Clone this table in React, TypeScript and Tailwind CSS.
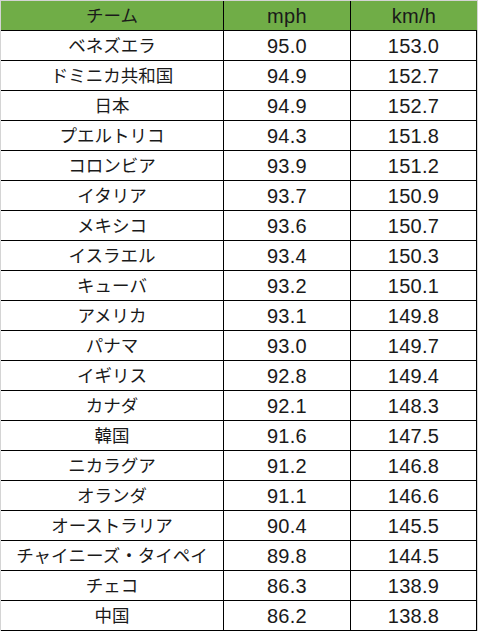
const rows: [string, string, string][] = [
  ["ベネズエラ", "95.0", "153.0"],
  ["ドミニカ共和国", "94.9", "152.7"],
  ["日本", "94.9", "152.7"],
  ["プエルトリコ", "94.3", "151.8"],
  ["コロンビア", "93.9", "151.2"],
  ["イタリア", "93.7", "150.9"],
  ["メキシコ", "93.6", "150.7"],
  ["イスラエル", "93.4", "150.3"],
  ["キューバ", "93.2", "150.1"],
  ["アメリカ", "93.1", "149.8"],
  ["パナマ", "93.0", "149.7"],
  ["イギリス", "92.8", "149.4"],
  ["カナダ", "92.1", "148.3"],
  ["韓国", "91.6", "147.5"],
  ["ニカラグア", "91.2", "146.8"],
  ["オランダ", "91.1", "146.6"],
  ["オーストラリア", "90.4", "145.5"],
  ["チャイニーズ・タイペイ", "89.8", "144.5"],
  ["チェコ", "86.3", "138.9"],
  ["中国", "86.2", "138.8"],
];

const jp = "font-['Noto_Sans_CJK_JP',sans-serif] text-[17.5px] font-normal";
const num = "font-['Liberation_Sans','Noto_Sans_CJK_JP',sans-serif] text-[20px] font-normal tracking-[0.3px]";

export default function App() {
  return (
    <div className="w-[478px] h-[631px] bg-white text-[#1a1a1a]">
      <div className="border-t border-l border-r border-[#d4d4d4] w-[478px]">
        <div className="flex h-[30px] border-b border-black bg-[#70ad47]">
          <div className={`w-[223px] border-r border-black flex items-center justify-center ${jp}`}>チーム</div>
          <div className={`w-[127px] border-r border-black flex items-center justify-center ${num}`}>mph</div>
          <div className={`w-[126px] flex items-center justify-center ${num}`}>km/h</div>
        </div>
        {rows.map(([team, mph, kmh]) => (
          <div key={team} className="flex h-[30px] border-b border-black">
            <div className={`w-[223px] border-r border-black flex items-center justify-center ${jp}`}>{team}</div>
            <div className={`w-[127px] border-r border-black flex items-center justify-center ${num}`}>{mph}</div>
            <div className={`w-[126px] border-r border-black flex items-center justify-center ${num}`}>{kmh}</div>
          </div>
        ))}
      </div>
    </div>
  );
}
